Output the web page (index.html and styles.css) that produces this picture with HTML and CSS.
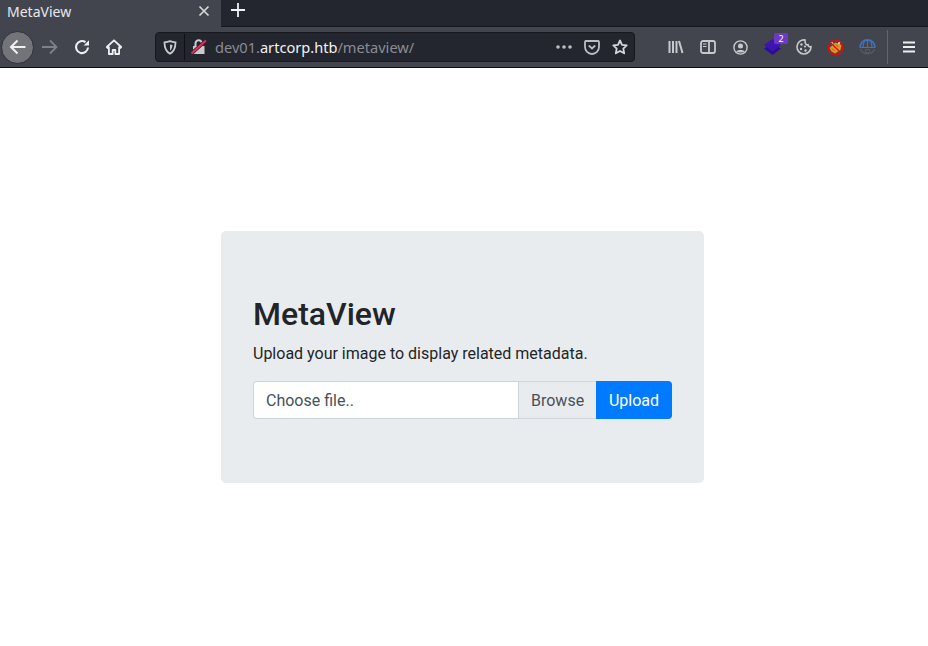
FILE: index.html
```html
<!DOCTYPE html>
<html lang="en">
<head>
<meta charset="utf-8">
<title>MetaView</title>
<link rel="stylesheet" href="styles.css">
</head>
<body>
<header class="browser">
  <div class="tabbar">
    <div class="tab">
      <span class="tab-title">MetaView</span>
      <svg class="tab-close" width="12" height="12" viewBox="0 0 12 12"><path d="M1.500 1.500l9 9M10.500 1.500l-9 9" stroke="#d6d7da" stroke-width="1.700" fill="none"/></svg>
    </div>
    <svg class="new-tab" width="16" height="16" viewBox="0 0 16 16"><path d="M8 1v14M1 8h14" stroke="#f2f2f4" stroke-width="1.800" fill="none"/></svg>
  </div>
  <div class="toolbar">
    <div class="nav">
      <span class="back">
        <svg width="18" height="16" viewBox="0 0 18 16"><path d="M16.500 8H2M8.500 1.500L2 8l6.500 6.500" stroke="#f0f0f2" stroke-width="2" fill="none"/></svg>
      </span>
      <svg class="forward" width="18" height="16" viewBox="0 0 18 16"><path d="M1 8h14.500M9 1.500L15.500 8 9 14.500" stroke="#7f8187" stroke-width="1.800" fill="none"/></svg>
      <svg class="reload" width="16" height="16" viewBox="0 0 16 16"><path d="M14 8.500A6 6 0 1 1 11.500 3.200" stroke="#eeeef0" stroke-width="2.100" fill="none"/><path d="M9.600 6.600h5.400V1.200z" fill="#eeeef0"/></svg>
      <svg class="home" width="16" height="16" viewBox="0 0 16 16"><path d="M8 1.300L.8 8l1.100 1.100 1-.9V15h3.800v-4h2.600v4h3.800V8.200l1 .9L15.200 8z" fill="none" stroke="#eeeef0" stroke-width="1.800" stroke-linejoin="round"/></svg>
    </div>
    <div class="urlbar">
      <svg class="shield" width="14" height="15" viewBox="0 0 14 15"><path d="M7 1.200c2 .8 3.600 1.100 5.500 1.200 0 4.800-1.500 9-5.500 11.300C3 11.400 1.500 7.200 1.500 2.400 3.400 2.300 5 2 7 1.200z" fill="none" stroke="#c9cacd" stroke-width="1.800"/><path d="M7 4.500l2.500.6C9.400 7.500 8.500 9.500 7 10.700z" fill="#c9cacd"/></svg>
      <span class="url-sep"></span>
      <svg class="lock" width="16" height="16" viewBox="0 0 16 16"><path d="M2 7h11.500v8H2z" fill="#c9cacd"/><path d="M4.500 7V4.500a3.200 3.200 0 0 1 6.400 0V7" stroke="#c9cacd" stroke-width="2" fill="none"/><path d="M.5 14.500L15 1.500" stroke="#23262f" stroke-width="3.600"/><path d="M.5 14.500L15 1.500" stroke="#ee2a55" stroke-width="2"/></svg>
      <span class="url"><span class="url-dim">dev01.</span><span class="url-host">artcorp.htb</span><span class="url-dim">/metaview/</span></span>
      <span class="url-actions">
        <svg width="16" height="4" viewBox="0 0 16 4"><circle cx="2" cy="2" r="1.800" fill="#bcbdc1"/><circle cx="8" cy="2" r="1.800" fill="#bcbdc1"/><circle cx="14" cy="2" r="1.800" fill="#bcbdc1"/></svg>
        <svg width="16" height="15" viewBox="0 0 16 15"><path d="M2 1h12a1 1 0 0 1 1 1v5a7 7 0 0 1-14 0V2a1 1 0 0 1 1-1z" fill="none" stroke="#bcbdc1" stroke-width="1.800"/><path d="M4.800 5.500L8 8.500l3.200-3" fill="none" stroke="#bcbdc1" stroke-width="1.800"/></svg>
        <svg width="16" height="16" viewBox="0 0 16 16"><path d="M8 1.500l2 4.300 4.700.6-3.400 3.200.9 4.700L8 12l-4.200 2.300.9-4.700L1.300 6.400 6 5.800z" fill="none" stroke="#d6d7da" stroke-width="1.800" stroke-linejoin="round"/></svg>
      </span>
    </div>
    <div class="tools">
      <svg class="t-library" width="16" height="14" viewBox="0 0 16 14"><path d="M1.500 1v12M5 1v12M8.500 1v12M11 1l3.500 12" stroke="#c8c9cc" stroke-width="2" fill="none"/></svg>
      <svg class="t-sidebar" width="16" height="14" viewBox="0 0 16 14"><rect x="1" y="1" width="14" height="12" rx="2" fill="none" stroke="#c8c9cc" stroke-width="1.800"/><path d="M9 1.500v11" stroke="#c8c9cc" stroke-width="1.800"/><path d="M3 4h3.500M3 6.500h3.500" stroke="#c8c9cc" stroke-width="1.200"/></svg>
      <svg class="t-account" width="15" height="15" viewBox="0 0 15 15"><circle cx="7.500" cy="7.500" r="6.600" fill="none" stroke="#c8c9cc" stroke-width="1.400"/><circle cx="7.500" cy="6" r="2.500" fill="#c8c9cc"/><path d="M3.300 11.500c1-2 7.400-2 8.400 0-1 1.400-7.400 1.400-8.400 0z" fill="#c8c9cc"/></svg>
      <span class="t-stack">
        <svg width="17" height="16" viewBox="0 0 17 16"><path d="M8.500 4L17 9.500 8.500 16 0 9.500z" fill="#2b0f8f"/><path d="M8.500 0L17 6l-8.500 6.500L0 6z" fill="#3d13b4"/></svg>
        <span class="badge">2</span>
      </span>
      <svg class="t-cookie" width="16" height="16" viewBox="0 0 16 16"><path d="M9 1a7 7 0 1 0 6 6.700c-1.400.5-3-.4-3-1.900-1.600.3-3.200-1.100-3-4.800z" fill="none" stroke="#c8c9cc" stroke-width="1.600"/><g fill="#c8c9cc"><circle cx="5.500" cy="5.500" r="1.200"/><circle cx="9" cy="7.500" r="1.100"/><circle cx="5" cy="10" r="1.200"/><circle cx="9.500" cy="11.500" r="1.200"/></g></svg>
      <svg class="t-noscript" width="17" height="17" viewBox="0 0 17 17"><circle cx="8.500" cy="8.500" r="7" fill="#54423a"/><path d="M2.500 9l6-5.500 6 2.500-1 5-5.500 3.500-3.500-2z" fill="#e8921f"/><path d="M4 2.500l2 3M13 2.500l-1.500 2.500" stroke="#ece0d0" stroke-width="1.600"/><path d="M6 6.500l2.500 2.500M9 5.500l2.500 2.500M5 9.500l2.500 2.500" stroke="#a8620f" stroke-width="1"/><circle cx="8.500" cy="8.500" r="7.400" fill="none" stroke="#cc1414" stroke-width="1.300"/><path d="M3.500 3.500l10 10" stroke="#cc1414" stroke-width="1.200"/></svg>
      <svg class="t-globe" width="17" height="17" viewBox="0 0 17 17"><path d="M1 8.500a7.500 7.500 0 0 1 15 0" fill="none" stroke="#3f72bf" stroke-width="1.800"/><path d="M1 8.500h15M8.500 1v7.500M5.500 2C4.500 4 4 6 4 8.500M11.500 2c1 2 1.500 4 1.500 6.500" stroke="#3f72bf" stroke-width="1.200" fill="none"/><path d="M1.500 10a7.500 7.500 0 0 0 14 0" fill="none" stroke="#55585f" stroke-width="1.600"/><path d="M6.500 10.500h4v3h-4z" fill="none" stroke="#55585f" stroke-width="1"/></svg>
      <span class="tool-sep"></span>
      <svg class="t-menu" width="12" height="12" viewBox="0 0 12 12"><path d="M0 1.500h12M0 6h12M0 10.500h12" stroke="#eeeef0" stroke-width="1.800"/></svg>
    </div>
  </div>
</header>
<main class="page">
  <section class="jumbotron">
    <h1 class="title">MetaView</h1>
    <p class="lead">Upload your image to display related metadata.</p>
    <form class="input-group">
      <label class="file-label">Choose file..</label>
      <span class="browse">Browse</span>
      <button class="upload" type="button">Upload</button>
    </form>
  </section>
</main>
</body>
</html>
```
FILE: styles.css
```css
* { box-sizing: border-box; }
html, body { margin: 0; padding: 0; }
body {
  width: 928px;
  height: 646px;
  overflow: hidden;
  background: #fff;
  font-family: Roboto, "Liberation Sans", sans-serif;
  display: flex;
  flex-direction: column;
}
.browser { flex: none; height: 68px; background: #42454e; border-bottom: 1px solid #0c0c0d; }
.tabbar {
  height: 27px;
  background: #23262f;
  border-bottom: 1px solid #15171c;
  display: flex;
  align-items: flex-start;
}
.tab {
  width: 221px;
  height: 27px;
  background: #42454e;
  display: flex;
  align-items: center;
  justify-content: space-between;
  padding: 0 11px 5px 7px;
}
.tab-title { font-size: 14px; color: #e8e8ea; font-family: "Noto Sans", sans-serif; }
.new-tab { margin: 2px 0 0 9px; }
.toolbar { height: 40px; display: flex; align-items: center; }
.nav { display: flex; align-items: center; width: 155px; flex: none; }
.back {
  width: 33px;
  height: 33px;
  margin-left: 1px;
  border-radius: 50%;
  background: #72747a;
  border: 1px solid #2f3138;
  display: flex;
  align-items: center;
  justify-content: center;
  flex: none;
}
.forward { margin-left: 7px; }
.reload { margin-left: 15px; }
.home { margin-left: 16px; }
.urlbar {
  width: 480px;
  height: 30px;
  flex: none;
  background: #23262f;
  border: 1px solid #16181d;
  border-radius: 4px;
  display: flex;
  align-items: center;
  padding: 0 6px 0 7px;
}
.url-sep { width: 1px; height: 26px; background: #0f1014; margin-left: 7px; }
.lock { margin-left: 6px; }
.url {
  margin-left: 8px;
  font-family: "Noto Sans", sans-serif;
  font-size: 14.600px;
  white-space: nowrap;
}
.url-dim { color: #8a8c92; }
.url-host { color: #f2f2f4; }
.url-actions { margin-left: auto; display: flex; align-items: center; gap: 12px; }
.tools { flex: 1; display: flex; align-items: center; position: relative; height: 40px; padding-left: 33px; }
.t-sidebar { margin-left: 16px; }
.t-account { margin-left: 17px; }
.t-stack { position: relative; width: 17px; height: 16px; margin-left: 16px; display: block; }
.t-stack svg { display: block; }
.badge {
  position: absolute;
  left: 10px;
  top: -6px;
  width: 14px;
  height: 11px;
  border-radius: 2px;
  background: #6c3bc4;
  color: #fff;
  font-size: 9px;
  line-height: 11px;
  text-align: center;
  font-family: "Noto Sans", sans-serif;
}
.t-cookie { margin-left: 15px; }
.t-noscript { margin-left: 15px; }
.t-globe { margin-left: 15px; }
.tool-sep { width: 1px; height: 34px; background: #63656b; margin-left: 11px; }
.t-menu { margin-left: 15px; }
.page {
  flex: 1;
  display: flex;
  align-items: center;
  justify-content: center;
  padding-right: 3px;
}
.jumbotron {
  width: 483px;
  height: 252px;
  padding: 64px 32px;
  background: #e9ecef;
  border-radius: 4.800px;
}
.title {
  margin: 0 0 8px;
  font-size: 32px;
  line-height: 38px;
  font-weight: 500;
  color: #212529;
}
.lead {
  margin: 0 0 14px;
  font-size: 16px;
  line-height: 26px;
  color: #212529;
}
.input-group { display: flex; height: 38px; font-size: 16px; line-height: 24px; margin: 0; }
.file-label {
  flex: 1;
  background: #fff;
  color: #495057;
  border: 1px solid #ced4da;
  border-right: 0;
  border-radius: 4px 0 0 4px;
  padding: 7px 12px 5px;
}
.browse {
  width: 78px;
  background: #e9ecef;
  color: #495057;
  border: 1px solid #ced4da;
  border-right: 0;
  padding: 7px 12px 5px;
}
.upload {
  width: 76px;
  background: #007bff;
  color: #fff;
  border: 0;
  border-radius: 0 4px 4px 0;
  font: inherit;
  padding: 2px 0 0;
}
```
